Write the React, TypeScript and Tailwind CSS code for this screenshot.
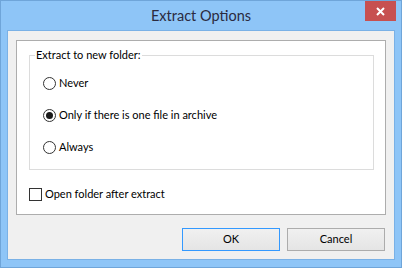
import React from 'react';

const font = { fontFamily: 'Lato, "Noto Sans", sans-serif' };

function Radio({ label, checked = false }: { label: string; checked?: boolean }) {
  return (
    <div className="flex items-center h-[16px]">
      <span className="w-[13px] h-[13px] rounded-full border border-[#333333] bg-white flex items-center justify-center shrink-0">
        {checked && <span className="w-[7px] h-[7px] rounded-full bg-[#1a1a1a]" />}
      </span>
      <span className="ml-[3px] text-[11px] leading-[16px] text-[#000000]">{label}</span>
    </div>
  );
}

export default function App() {
  return (
    <div
      className="w-[402px] h-[268px] bg-[#8ec5f7] border border-[#6fa5d9] px-[6px] pb-[7px] flex flex-col select-none"
      style={font}
    >
      {/* Title bar */}
      <div className="h-[29px] flex items-center relative">
        <div className="flex-1 text-center text-[14.5px] leading-[20px] text-[#2b2b3f] pt-[1px]">Extract Options</div>
        <div className="absolute right-[-1px] top-0 w-[31px] h-[20px] bg-[#c75050] flex items-center justify-center">
          <svg width="9" height="9" viewBox="0 0 9 9">
            <path d="M1 1 L8 8 M8 1 L1 8" stroke="#ffffff" strokeWidth="2" />
          </svg>
        </div>
      </div>

      {/* Client area */}
      <div className="flex-1 border border-[#7ab1e6] bg-[#f0f0f0] flex flex-col px-[8px] pt-[9px] pb-[8px]">
        <div className="h-[175px] bg-white border border-[#adadad] pl-[12px] pr-[11px] pt-[6px]">
          <fieldset className="border border-[#dcdcdc] h-[123px] pl-[5px]">
            <legend className="px-[1px] text-[11px] leading-[16px] text-black">Extract to new folder:</legend>
            <div className="flex flex-col gap-[16px] pl-[8px] pt-[12px]">
              <Radio label="Never" />
              <Radio label="Only if there is one file in archive" checked />
              <Radio label="Always" />
            </div>
          </fieldset>
          <div className="flex items-center mt-[16px]">
            <span className="w-[13px] h-[13px] border border-[#333333] bg-white shrink-0" />
            <span className="ml-[3px] text-[11px] leading-[16px] text-black">Open folder after extract</span>
          </div>
        </div>

        <div className="flex justify-end gap-[7px] mt-[13px] pr-[1px]">
          <button className="w-[98px] h-[23px] border border-[#3399ff] bg-gradient-to-b from-[#f0f0f0] to-[#e5e5e5] text-[11px] text-black">
            OK
          </button>
          <button className="w-[98px] h-[23px] border border-[#acacac] bg-gradient-to-b from-[#f0f0f0] to-[#e5e5e5] text-[11px] text-black">
            Cancel
          </button>
        </div>
      </div>
    </div>
  );
}
